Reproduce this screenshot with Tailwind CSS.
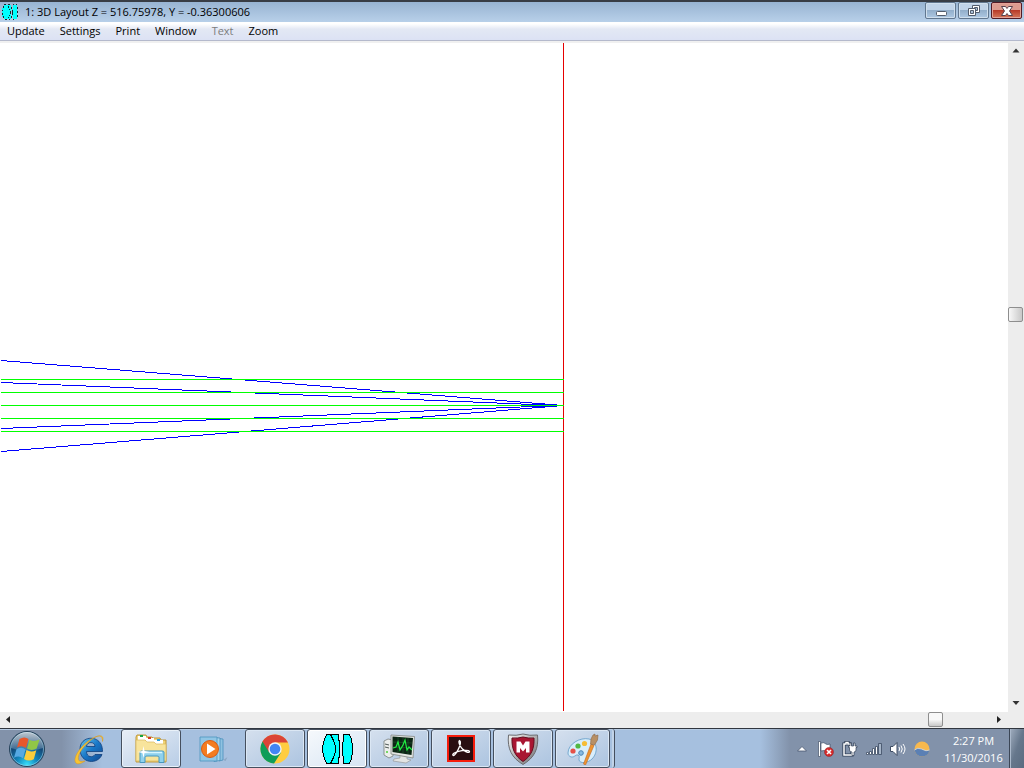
<!DOCTYPE html>
<html lang="en">
<head>
<meta charset="utf-8">
<title>1: 3D Layout</title>
<script src="https://cdn.jsdelivr.net/npm/@tailwindcss/browser@4"></script>
</head>
<body class="flex h-screen flex-col overflow-hidden bg-white font-['Open_Sans','Noto_Sans',sans-serif] text-[11px] text-black">

<header class="flex h-[22px] shrink-0 items-center border-t-2 border-[#383d45] bg-linear-to-b from-[#98b4d2] to-[#b8d0e9] px-[2px]">
  <svg class="h-4 w-4 shrink-0" viewBox="0 0 16 16" shape-rendering="crispEdges" aria-hidden="true">
    <path d="M2 1h7v14H2v-2H0V4h2zM11 1h4v14h-4v-3h-1V5h1z" fill="#00ffff"/>
    <path d="M2 0h2v1H2zM6 0h2v1H6zM11 0h1v1h-1zM14 0h1v1h-1zM1 2h1v2H1zM0 6h1v1H0zM0 9h1v2H0zM1 12h1v2H1zM3 15h2v1H3zM7 15h1v1H7zM11 15h1v1h-1zM6 2h1v2H6zM7 5h1v1H7zM8 7h1v3H8zM7 11h1v1H7zM6 13h1v1H6zM9 3h1v2H9zM10 6h1v5h-1zM9 12h1v2H9zM15 3h1v2h-1zM15 7h1v2h-1zM15 11h1v2h-1z" fill="#102b32"/>
  </svg>
  <h1 class="ml-[7px] grow truncate">1: 3D Layout Z = 516.75978, Y = -0.36300606</h1>
  <div class="flex gap-[2px] self-start">
    <button aria-label="Minimize" class="flex h-[17px] w-[31px] items-center justify-center rounded-[2px] border border-[#61778f] bg-linear-to-b from-[#c0d3e8] from-45% via-[#93afcb] via-50% to-[#aec9e3] shadow-[inset_0_0_0_1px_#d0dfed]">
      <svg class="h-4 w-4" viewBox="0 0 16 16"><rect x="3.500" y="8.500" width="10" height="4" rx="1" fill="#fff" stroke="#535d6c"/></svg>
    </button>
    <button aria-label="Restore" class="flex h-[17px] w-[31px] items-center justify-center rounded-[2px] border border-[#61778f] bg-linear-to-b from-[#c0d3e8] from-45% via-[#93afcb] via-50% to-[#aec9e3] shadow-[inset_0_0_0_1px_#d0dfed]">
      <svg class="h-4 w-4" viewBox="0 0 16 16" fill="#fff" stroke="#535d6c"><path d="M6.500 2.500h7v7h-7z"/><path d="M8.500 4.500h3v3h-3z" fill="#a8bfd7"/><path d="M2.500 5.500h7v7h-7z"/><path d="M4.500 7.500h3v3h-3z" fill="#a8bfd7"/></svg>
    </button>
    <button aria-label="Close" class="flex h-[17px] w-[31px] items-center justify-center rounded-[2px] border border-[#521b25] bg-linear-to-b from-[#dc9c90] from-45% via-[#b83b29] via-50% to-[#d4755a] shadow-[inset_0_0_0_1px_#e2a398]">
      <svg class="h-4 w-4" viewBox="0 0 16 16"><path d="M2.500 3.500h4L8 5.500l1.500-2h4L10.500 8l3 4.500h-4L8 10.500l-1.500 2h-4l3-4.500z" fill="#fff" stroke="#58424d"/></svg>
    </button>
  </div>
</header>

<nav aria-label="Menu" class="flex h-[19px] shrink-0 items-center gap-px border-b border-[#b4b9cc] bg-linear-to-b from-white from-10% via-[#e3e8f4] via-40% to-[#dce2f4]">
  <button class="px-[7px]">Update</button>
  <button class="px-[7px]">Settings</button>
  <button class="px-[7px]">Print</button>
  <button class="px-[7px]">Window</button>
  <button class="px-[7px] text-[#7c7c7c]" disabled>Text</button>
  <button class="px-[7px]">Zoom</button>
</nav>

<main class="grid min-h-0 grow grid-cols-[1fr_16px] grid-rows-[1fr_16px] border-t-2 border-[#f0f0f0]">
  <div id="plot" class="min-h-0 min-w-0 overflow-hidden">
    <svg class="h-full w-full" viewBox="0 43 1008 669" preserveAspectRatio="xMinYMid slice" shape-rendering="crispEdges" role="img" aria-label="Ray trace layout">
      <g stroke="#0000ff" fill="none">
        <path d="M1 360.500L557 405M1 382.500L557 405.500M1 428.500L557 405.500M1 451.500L557 406"/>
      </g>
      <path d="M563.500 43V711" stroke="#e60000"/>
      <path d="M1 379.500H564M1 392.500H564M1 405.500H564M1 418.500H564M1 431.500H564" stroke="#00ff00"/>
    </svg>
  </div>
  <div class="flex flex-col items-start bg-[#ededed]">
    <button aria-label="Scroll up" class="flex h-4 w-4 items-center justify-center"><svg class="h-4 w-4" viewBox="0 0 16 16"><path d="M4.500 9.500l3.500-4 3.500 4z" fill="#333"/></svg></button>
    <div class="grow-[248]"></div>
    <div role="scrollbar" aria-orientation="vertical" aria-controls="plot" aria-valuenow="40" class="h-[15px] w-[15px] shrink-0 rounded-[2px] border border-[#8e8e8e] bg-linear-to-r from-[#f8f8f8] to-[#c8c8c8]"></div>
    <div class="grow-[374]"></div>
    <button aria-label="Scroll down" class="flex h-4 w-4 items-center justify-center"><svg class="h-4 w-4" viewBox="0 0 16 16"><path d="M4.500 5l3.500 4 3.500-4z" fill="#333"/></svg></button>
  </div>
  <div class="flex items-start bg-[#ededed]">
    <button aria-label="Scroll left" class="flex h-4 w-4 items-center justify-center"><svg class="h-4 w-4" viewBox="0 0 16 16"><path d="M10 4v7L6 7.500z" fill="#222"/></svg></button>
    <div class="grow-[911]"></div>
    <div role="scrollbar" aria-orientation="horizontal" aria-controls="plot" aria-valuenow="95" class="h-[15px] w-[15px] shrink-0 rounded-[2px] border border-[#8e8e8e] bg-linear-to-b from-[#f8f8f8] from-50% to-[#c8c8c8]"></div>
    <div class="grow-[49]"></div>
    <button aria-label="Scroll right" class="flex h-4 w-4 items-center justify-center"><svg class="h-4 w-4" viewBox="0 0 16 16"><path d="M5 4v7l4-3.500z" fill="#222"/></svg></button>
  </div>
  <div class="bg-[#ededed]"></div>
</main>

<footer class="flex h-10 shrink-0 items-stretch border-t border-[#30363f] bg-linear-to-r from-[#8292aa] from-6% to-[#a6c0df] to-10% shadow-[inset_0_1px_0_#b6cbe3]">
  <button aria-label="Start" class="flex w-[54px] items-center justify-center">
    <svg class="h-[38px] w-[38px]" viewBox="0 0 38 38">
      <defs>
        <radialGradient id="orb" cx="50%" cy="95%" r="85%"><stop offset="0" stop-color="#38e0fb"/><stop offset=".35" stop-color="#1287bd"/><stop offset=".7" stop-color="#144a79"/><stop offset="1" stop-color="#405d79"/></radialGradient>
        <linearGradient id="gloss" x2="0" y2="1"><stop stop-color="#fff" stop-opacity=".65"/><stop offset="1" stop-color="#bdd5e8" stop-opacity=".2"/></linearGradient>
      </defs>
      <circle cx="19" cy="19" r="17.500" fill="url(#orb)" stroke="#27435b"/>
      <circle cx="19" cy="19" r="16.500" fill="none" stroke="#9bd0e7" stroke-opacity=".6"/>
      <path d="M3 18a16 16 0 0132 0q-16 6-32 0z" fill="url(#gloss)"/>
      <path d="M11.500 9q5-3 9 0l-2.500 9q-4-3-9-.500z" fill="#e9572b"/>
      <path d="M21.500 9.800q4.500 2.500 10-.200l-2.800 9q-5 2.700-9.700 0z" fill="#91c646"/>
      <path d="M8.500 19.300q5-3 9 .200l-2.500 8.700q-4-3-9-.500z" fill="#56a9e3"/>
      <path d="M18.500 20q4.500 2.700 9.800.200l-2.500 9q-5 2.700-9.800-.200z" fill="#fccd3b"/>
    </svg>
  </button>
  <div class="flex grow items-stretch gap-[2px] pl-[5px]">
    <button aria-label="Internet Explorer" class="flex w-[60px] items-center justify-center">
      <svg class="h-8 w-8" viewBox="0 0 32 32">
        <defs><linearGradient id="ie" x2="1" y2="1"><stop stop-color="#68c7ef"/><stop offset=".5" stop-color="#1877c7"/><stop offset="1" stop-color="#114890"/></linearGradient></defs>
        <path fill-rule="evenodd" d="M29.500 18.500H13.500c0 6 6.500 6.500 8.500 3h7c-4 10.500-22 9.500-22-5.500C7 1.500 30 1 29.500 18.500zM13.500 13.500H22c0-5-8-5.500-8.500 0z" fill="url(#ie)" stroke="#0f3f7c" stroke-width=".8"/>
        <path d="M29.500 8.500c2.500-8-5-6.500-12-2C7 13-1 26 3 30c2 2 6 0 9-2-4 1-6 .5-6.500-1.500C4 21 12 11 20 5.500c5-3.200 9.500-4.500 9.500 3z" fill="#f8c432" stroke="#d9961b" stroke-width=".5"/>
      </svg>
    </button>
    <button aria-label="File Explorer" class="flex w-[60px] items-center justify-center rounded-[3px] border border-[#454f5e] bg-linear-to-br from-[#e8eef6] to-[#b8cde6] shadow-[inset_0_0_0_1px_#e9f1f9]">
      <svg class="h-8 w-8" viewBox="0 0 32 32">
        <path d="M1 4l1-2h9l1 2h5l1 1h7l1 2h5v22H1z" fill="#f1d477" stroke="#bd963e"/>
        <path d="M3 3h8v4H3z" fill="#fff"/><path d="M5 2h3v2H5z" fill="#16a543"/>
        <path d="M11 5h8v4h-8z" fill="#fff"/><path d="M13 4h3v2h-3z" fill="#d73925"/>
        <path d="M19 7h9v4h-9z" fill="#fff"/><path d="M22 6h3v2h-3z" fill="#289fe0"/>
        <path d="M1 7h9l2 2h7l2 2h10v17H1z" fill="#f8e49c" stroke="#d9b75b" stroke-width=".7"/>
        <path d="M5 29.500V19q0-1 2-1h20q2 0 2 1v10.500h-5V24q0-1-2-1H12q-2 0-2 1v5.500z" fill="#8fd1ed" stroke="#4797be"/>
        <path d="M7 19.500h20" stroke="#d8f6ff" stroke-width="1.500"/>
        <path d="M8.500 13l1 5 5 1-5 1-1 5-1-5-5-1 5-1z" fill="#fff"/>
      </svg>
    </button>
    <button aria-label="Media Player" class="flex w-[60px] items-center justify-center">
      <svg class="h-8 w-8" viewBox="0 0 32 32">
        <path d="M22 5.500l4 .5v21l-4 1z" fill="#8fc2e1" stroke="#4a90bb" stroke-width=".8"/><path d="M17 4.500l6 .5v22.500l-6 1z" fill="#a8d5ec" stroke="#4a90bb" stroke-width=".8"/>
        <path d="M3 4h17v24H3z" fill="#91c6e5" stroke="#4c94be" stroke-width=".8"/><path d="M26.500 27l4-3-2 4z" fill="#718ba6" opacity=".5"/>
        <circle cx="13" cy="16" r="8.500" fill="#f47c20" stroke="#d95b12"/><path d="M10 10.500v11l8.500-5.500z" fill="#fff"/>
      </svg>
    </button>
    <button aria-label="Chrome" class="flex w-[60px] items-center justify-center rounded-[3px] border border-[#454f5e] bg-linear-to-br from-[#d5e0ee] to-[#acc4e0] shadow-[inset_0_0_0_1px_#dbe7f4]">
      <svg class="h-[30px] w-[30px]" viewBox="0 0 30 30">
        <circle cx="15" cy="15" r="14.500" fill="#ffcd40"/>
        <path d="M15 15L2.500 7.500A14.500 14.500 0 0014 29.500l7-11z" fill="#0f9d58"/>
        <path d="M2.500 7.500A14.500 14.500 0 0128 8.500H15L9 18z" fill="#db4437"/>
        <circle cx="15" cy="15" r="6.700" fill="#f1f4f7"/><circle cx="15" cy="15" r="5.300" fill="#4285f4"/>
      </svg>
    </button>
    <button aria-label="3D Layout" class="flex w-[60px] items-center justify-center rounded-[3px] border border-[#454f5e] bg-linear-to-br from-[#f6f9fc] to-[#d6e4f3] shadow-[inset_0_0_0_1px_#fff]">
      <svg class="h-8 w-8" viewBox="0 0 32 32" shape-rendering="crispEdges" fill="#00ffff" stroke="#000">
        <path d="M5.500 1.500h12v4l1 4v13l-1 4v4h-12l-2-5-2-7v-5l2-7z"/><path d="M9.500 1.500l3 6 2 6v5l-2 6-3 6" fill="none"/>
        <path d="M22.500 1.500h6l2 5 1 7v5l-1 7-2 5h-6v-5l-1-5v-9l1-5z"/>
      </svg>
    </button>
    <button aria-label="System Monitor" class="flex w-[60px] items-center justify-center rounded-[3px] border border-[#454f5e] bg-linear-to-br from-[#d5e0ee] to-[#acc4e0] shadow-[inset_0_0_0_1px_#dbe7f4]">
      <svg class="h-8 w-8" viewBox="0 0 32 32">
        <path d="M1 8l4-2 5 1v16l-4 2-5-3z" fill="#eceeec" stroke="#777d7c" stroke-width=".8"/><path d="M2 11l4 1M2 14l4 1" stroke="#505956"/><circle cx="4" cy="19" r="1" fill="#4fd23b"/>
        <path d="M17 22l7 1v3l4 1-5 3-13-2 1-2 6-1z" fill="#e2e4e3" stroke="#90918f" stroke-width=".6"/>
        <path d="M8 2l23.500 1.500L30 25 8 21z" fill="#e2e5e2" stroke="#818783" stroke-width=".8"/><path d="M9.500 3.500L30 5l-1.500 17L9.500 19z" fill="#0b2514"/>
        <path d="M10 9l19 1M10 14l19 1M15 4v16M20 5v15M25 5v16" stroke="#245c2f" stroke-width=".6"/>
        <path d="M10 15l3-1 2-5 2 8 3-5 2-5 2 10 2-3 3 3" fill="none" stroke="#20ef43" stroke-width="1.200"/>
      </svg>
    </button>
    <button aria-label="Acrobat Reader" class="flex w-[60px] items-center justify-center rounded-[3px] border border-[#454f5e] bg-linear-to-br from-[#d5e0ee] to-[#acc4e0] shadow-[inset_0_0_0_1px_#dbe7f4]">
      <svg class="h-8 w-8" viewBox="0 0 32 32"><path d="M2 2h28v27H2z" fill="#f51c0c"/><path d="M4 4h24v23H4z" fill="#290e11"/>
        <path d="M14.500 7.500c-1.500 1 .5 6 3 8.500 3 3 6.500 4.500 7 2.500.3-1.800-7-1.200-11-.2-4 1-6.500 3-5.500 4 1.500 1.300 5-5 6.200-8 1.300-3.300 1.800-6.300.3-6.800z" fill="none" stroke="#fff" stroke-width="1.300"/></svg>
    </button>
    <button aria-label="McAfee" class="flex w-[60px] items-center justify-center rounded-[3px] border border-[#454f5e] bg-linear-to-br from-[#d5e0ee] to-[#acc4e0] shadow-[inset_0_0_0_1px_#dbe7f4]">
      <svg class="h-8 w-8" viewBox="0 0 32 32">
        <defs><linearGradient id="shield" x2="1" y2="1"><stop stop-color="#f5f5f5"/><stop offset="1" stop-color="#6d6d70"/></linearGradient></defs>
        <path d="M1.500 2q8 1 14.500-1 6.500 2 14.500 1C32 16 27 25 16 31.500 5 25 0 16 1.500 2z" fill="url(#shield)" stroke="#6b6c70"/>
        <path d="M5 5q6 .5 11-1 5 1.500 11 1c.5 10-2.500 18-11 23.500C7.500 23 4.500 15 5 5z" fill="#a91632" stroke="#620e20"/>
        <path d="M9.500 19.500v-11h4L16 12.500l2.500-4h4v11h-3.500v-4.500L16 18.500l-3-3.500v4.500z" fill="#fff"/>
      </svg>
    </button>
    <button aria-label="Paint" class="flex w-[55px] items-center justify-center rounded-[3px] border border-[#454f5e] bg-linear-to-br from-[#d5e0ee] to-[#acc4e0] shadow-[inset_0_0_0_1px_#dbe7f4]">
      <svg class="h-8 w-8" viewBox="0 0 32 32">
        <path d="M1 20C1 11 13 4 22 6c9 3 9 14 3 20-4 4-12 5-13 1 0-3 1-4-1-5-2-1-4 3-7 2-2-1-3-2-3-4z" fill="#d9eefb" stroke="#609ac6" stroke-width=".8"/>
        <circle cx="6" cy="18" r="2.600" fill="#e55147"/><circle cx="11" cy="13" r="2.600" fill="#51b844"/><circle cx="17.500" cy="10.500" r="2.600" fill="#f6bd36"/><circle cx="14" cy="20" r="2.300" fill="#87bce5" stroke="#4d86b7"/>
        <path d="M24 11l3 1.500L18.500 32l-2-1z" fill="#f09430" stroke="#be6822" stroke-width=".6"/><path d="M23.500 11l.5-5 2-4 2-1v2l3-1-.5 5-3 5z" fill="#b89065" stroke="#8c6747" stroke-width=".6"/>
      </svg>
    </button>
    <span class="w-[3px] rounded-r-[3px] border-r border-[#454f5e] bg-[#c1d3e8]"></span>
  </div>
  <div class="flex items-center bg-linear-to-r from-[#8292aa]/0 to-[#8292aa] to-12% pl-[30px]">
    <div class="flex items-center">
      <button aria-label="Show hidden icons" class="w-6 pl-1"><svg class="h-4 w-4" viewBox="0 0 16 16"><path d="M3.500 10L8 5.500l4.500 4.500z" fill="#fff" stroke="#46566e" stroke-width=".8"/></svg></button>
      <button aria-label="Action Center" class="w-6 pl-1"><svg class="h-4 w-4" viewBox="0 0 16 16"><path d="M.500 .500h2v15h-2z" fill="#fff" stroke="#2f3e55" stroke-width=".6"/><path d="M3 2q3-1 5 1 1 1 4 0v7q-2 1-4 0-2-1-5 0z" fill="#fff" stroke="#2f3e55" stroke-width=".6"/><circle cx="11" cy="11" r="4.500" fill="#d62c2c" stroke="#8c2027" stroke-width=".5"/><path d="M9 9l4 4M13 9l-4 4" stroke="#fff" stroke-width="1.600"/></svg></button>
      <button aria-label="Power" class="w-6 pl-1"><svg class="h-4 w-4" viewBox="0 0 16 16"><path d="M8 4V3H6V1.500H4V3H2v11h8v-3" fill="none" stroke="#2f3e55" stroke-width="3.200"/><path d="M8 4V3H6V1.500H4V3H2v11h8v-3" fill="none" stroke="#fff" stroke-width="1.500"/><path d="M8 2h1.500v3h2V2H13v3h2v1.500h-1V9q0 2-2 2v3.500h-2V11Q7.500 11 7.500 9V6.500h-1V5H8z" fill="#fff" stroke="#2f3e55" stroke-width=".7"/></svg></button>
      <button aria-label="Network" class="w-6 pl-1"><svg class="h-4 w-4" viewBox="0 0 16 16" fill="#fff" stroke="#3c4b62" stroke-width=".8"><path d="M.500 11.500h2v2h-2zM3.500 10.500h2v3h-2zM6.500 7.500h2v6h-2zM9.500 5.500h2v8h-2z"/><path d="M12.500 2.500h3v11h-3z" fill="#a5b4c7"/></svg></button>
      <button aria-label="Volume" class="w-6 pl-1"><svg class="h-4 w-4" viewBox="0 0 16 16" fill="none"><path d="M.500 5.500H3l4-4v13l-4-4H.500z" fill="#fff" stroke="#3c4b62"/><path d="M9 6q1.500 2 0 4M11 4.500q2.500 3.500 0 7M13 3q4 5 0 10" stroke="#fff"/></svg></button>
      <button aria-label="Weather" class="w-6 pl-1"><svg class="h-4 w-4" viewBox="0 0 16 16"><circle cx="8" cy="8" r="7.500" fill="#f8b84d"/><path d="M.500 9q3-3 7-1 5 3 8 1-1 6-7.500 6.500Q2 15 .500 9z" fill="#5b80b4"/><path d="M.500 9q3-3 7-1 5 3 8 1" fill="none" stroke="#d5deea" stroke-width=".8"/></svg></button>
    </div>
    <time datetime="2016-11-30T14:27" class="w-[75px] pl-1 text-center leading-[17px] text-white">2:27 PM<br>11/30/2016</time>
  </div>
  <button aria-label="Show desktop" class="w-[15px] border-l border-[#3b4656] bg-linear-to-br from-[#a1aebf] via-[#66778c] to-[#5a6b80] shadow-[inset_1px_0_0_#aab8ca]"></button>
</footer>
</body>
</html>
